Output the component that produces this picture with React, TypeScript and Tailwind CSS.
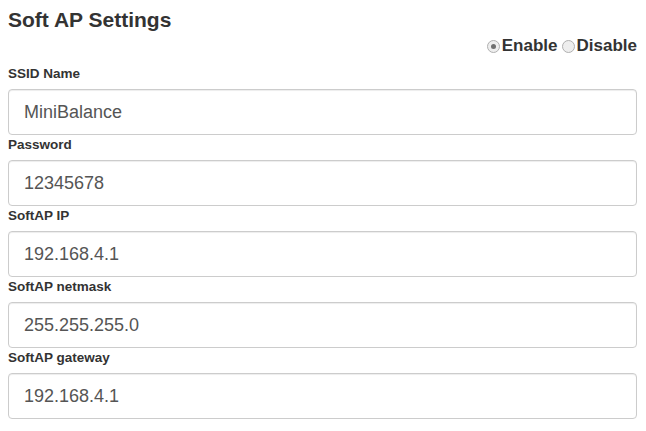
import React from "react";

const fields = [
  { label: "SSID Name", value: "MiniBalance" },
  { label: "Password", value: "12345678" },
  { label: "SoftAP IP", value: "192.168.4.1" },
  { label: "SoftAP netmask", value: "255.255.255.0" },
  { label: "SoftAP gateway", value: "192.168.4.1" },
];

function Radio({ checked }: { checked: boolean }) {
  return (
    <span className="w-[13px] h-[13px] rounded-full border border-[#b0b0b0] bg-[#eeeeee] flex items-center justify-center shrink-0">
      {checked && <span className="w-[5px] h-[5px] rounded-full bg-[#707070]" />}
    </span>
  );
}

export default function App() {
  return (
    <div
      className="w-[646px] h-[431px] bg-white text-[#333] pl-[8px] pr-[9px] pt-[8px]"
      style={{ fontFamily: '"Liberation Sans", Arial, Helvetica, sans-serif' }}
    >
      <h3 className="text-[21px] leading-[24px] font-bold">Soft AP Settings</h3>
      <div className="mt-[4px] flex justify-end items-center h-[20px] text-[17px] leading-[20px] font-bold">
        <Radio checked />
        <span className="ml-[2px]">Enable</span>
        <span className="ml-[4px]"><Radio checked={false} /></span>
        <span className="ml-[2px]">Disable</span>
      </div>
      <div className="mt-[9px] flex flex-col gap-[1px]">
        {fields.map((f) => (
          <div key={f.label} className="flex flex-col">
            <label className="block text-[13.5px] leading-[18px] font-bold mb-[6px]">{f.label}</label>
            <div className="h-[46px] w-full border border-[#ccc] rounded-[4px] shadow-[inset_0_1px_1px_rgba(0,0,0,0.075)] flex items-center px-[15px] text-[18px] text-[#555]">
              {f.value}
            </div>
          </div>
        ))}
      </div>
    </div>
  );
}
